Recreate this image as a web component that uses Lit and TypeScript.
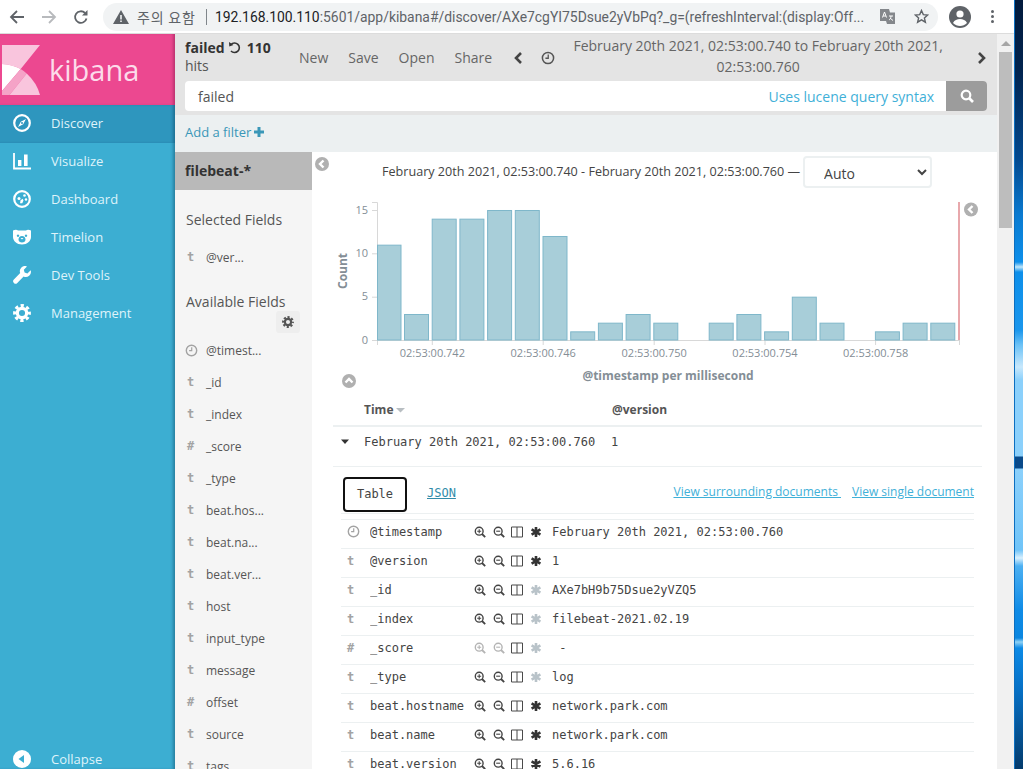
import { LitElement, html, css, svg } from "lit";
import { customElement } from "lit/decorators.js";

const gear = (size: number, color: string) => html`<svg width=${size} height=${size} viewBox="0 0 20 20"><circle cx="10" cy="10" r="5.2" fill="none" stroke=${color} stroke-width="3.6"/><circle cx="10" cy="10" r="8.2" fill="none" stroke=${color} stroke-width="3.4" stroke-dasharray="3.6 2.84" stroke-dashoffset="1.8"/></svg>`;
const clock = (size: number, color: string) => html`<svg width=${size} height=${size} viewBox="0 0 12 12"><circle cx="6" cy="6" r="4.8" fill="none" stroke=${color} stroke-width="1.3"/><path d="M6.2 3v3.2H3.8" fill="none" stroke=${color} stroke-width="1.1"/></svg>`;
const mag = (plus: boolean, color: string) => html`<svg class="ti" width="12" height="12" viewBox="0 0 12 12"><circle cx="5.2" cy="5.2" r="3.9" fill="none" stroke=${color} stroke-width="1.4"/><path d="M8 8l3.2 3.2" stroke=${color} stroke-width="1.8"/><path d=${plus ? "M3.2 5.2h4M5.2 3.2v4" : "M3.2 5.2h4"} stroke=${color} stroke-width="1.1"/></svg>`;
const cols = html`<svg class="ti" width="12" height="12" viewBox="0 0 12 12"><path d="M.5 1h11v10H.5zM6 1v10" fill="none" stroke="#4a4a4a" stroke-width="1"/></svg>`;
const star = (color: string) => html`<svg class="ti" width="12" height="12" viewBox="0 0 12 12"><path d="M6 1v10M1.6 3.4l8.8 5.2M10.4 3.4L1.6 8.6" stroke=${color} stroke-width="2.6"/></svg>`;
const circleArrow = (d: string, cls: string) => html`<svg class=${cls} width="14" height="14" viewBox="0 0 14 14"><circle cx="7" cy="7" r="7" fill="#b0b0b0"/><path d=${d} fill="none" stroke="#fff" stroke-width="2.4"/></svg>`;

const navIcons: Record<string, unknown> = {
  Discover: html`<svg width="18" height="18" viewBox="0 0 18 18"><circle cx="9" cy="9" r="7.8" fill="none" stroke="#fff" stroke-width="2.2"/><path d="M13 5L10.2 10.2 5 13 7.8 7.8z" fill="#fff"/><circle cx="9" cy="9" r="1" fill="#2e96be"/></svg>`,
  Visualize: html`<svg width="18" height="18" viewBox="0 0 18 18"><path d="M1 1v15.5h17" fill="none" stroke="#fff" stroke-width="1.8"/><path d="M5 8h3.4v6H5zM11 2.500h3.600V14H11z" fill="#fff"/></svg>`,
  Dashboard: html`<svg width="18" height="18" viewBox="0 0 18 18"><circle cx="9" cy="9" r="7.8" fill="none" stroke="#fff" stroke-width="2.200"/><circle cx="6" cy="8.500" r="1.500" fill="#fff"/><circle cx="11.500" cy="5.500" r="1.300" fill="#fff"/><circle cx="13" cy="9.500" r="1.200" fill="#fff"/><path d="M7.500 10.500l2-1.800 1 1.600-1.200 3H7z" fill="#fff"/></svg>`,
  Timelion: html`<svg width="18" height="16" viewBox="0 0 18 16"><path fill-rule="evenodd" fill="#fff" d="M0 1.500C2 .5 4 .5 5 1.500h8c1-1 3-1 5 0V8c0 4-4 7.500-9 7.500S0 12 0 8zM5 5.500a1.200 1.200 0 1 0 .01 0zM13 5.500a1.200 1.200 0 1 0 .01 0zM9 7c-2.200 0-3.500 1.800-3.500 3.500S7 13.500 9 13.500s3.500-1.300 3.500-3S11.200 7 9 7z"/><path d="M7.500 9h3l-1.500 1.500z" fill="#fff"/></svg>`,
  "Dev Tools": html`<svg width="18" height="18" viewBox="0 0 18 18"><path fill="#fff" d="M17.700 4.200l-3.300 3.200-2.800-.8-.8-2.800L14 .4a5.200 5.200 0 0 0-6.800 6.700L.9 13.500a2.400 2.400 0 0 0 3.400 3.400l6.300-6.400a5.200 5.200 0 0 0 7.100-6.300z"/></svg>`,
  Management: gear(18, "#fff"),
};

const fields = [["t", "_id"], ["t", "_index"], ["#", "_score"], ["t", "_type"], ["t", "beat.hos..."], ["t", "beat.na..."], ["t", "beat.ver..."], ["t", "host"], ["t", "input_type"], ["t", "message"], ["#", "offset"], ["t", "source"], ["t", "tags"]];
const counts = [11, 3, 14, 14, 15, 15, 12, 1, 2, 3, 2, 0, 2, 3, 1, 5, 2, 0, 1, 2, 2];
const xTicks = [[432.3, "02:53:00.742"], [543.2, "02:53:00.746"], [654.2, "02:53:00.750"], [765, "02:53:00.754"], [875.6, "02:53:00.758"]] as [number, string][];
const rows = [
  ["c", "@timestamp", "February 20th 2021, 02:53:00.760", 1, 1],
  ["t", "@version", "1", 1, 1],
  ["t", "_id", "AXe7bH9b75Dsue2yVZQ5", 1, 0],
  ["t", "_index", "filebeat-2021.02.19", 1, 0],
  ["#", "_score", "\u00a0-", 0, 0],
  ["t", "_type", "log", 1, 0],
  ["t", "beat.hostname", "network.park.com", 1, 1],
  ["t", "beat.name", "network.park.com", 1, 1],
  ["t", "beat.version", "5.6.16", 1, 1],
] as [string, string, string, number, number][];

@customElement("app-root")
export class AppRoot extends LitElement {
  static styles = css`
    :host { display: flex; width: 1023px; height: 769px; overflow: hidden; font-family: "Open Sans", sans-serif; color: #444; }
    .window { width: 1014px; height: 769px; display: flex; flex-direction: column; flex: none; }
    .wall { flex: 1; border-left: 1px solid #0c6fc0; background: linear-gradient(180deg, #021a3c 0, #02244f 70px, #034a90 160px, #0a7ad0 215px, #0d8fea 262px, #bfe6fb 267px, #0d8fea 272px, #1a96ec 330px, #6cc2f6 345px, #c8e8fc 367px, #8bd0fb 380px, #8bd0fb 456px, #0a4a8a 457px, #0a4a8a 468px, #8bd0fb 469px, #70c4f8 550px, #d8f0fe 558px, #4cb0f2 566px, #0f8be6 610px, #0a86e0 638px, #8fd2f6 642px, #0c8ae6 648px, #0670c5 690px, #043b6c 769px); }
    .chrome { height: 34px; flex: none; display: flex; align-items: center; background: #fff; border-bottom: 1px solid #dcdcdc; box-sizing: border-box; padding-left: 7px; }
    .cbtn { width: 20px; height: 20px; flex: none; margin-right: 12px; display: flex; align-items: center; justify-content: center; }
    .omni { flex: none; width: 835px; height: 28px; border-radius: 14px; background: #f1f3f4; display: flex; align-items: center; box-sizing: border-box; padding-left: 10px; font: 14px Roboto, sans-serif; color: #5f6368; white-space: nowrap; }
    .warn { font: 14px "Noto Sans CJK KR", sans-serif; margin-left: 8px; color: #5f6368; width: 60px; flex: none; letter-spacing: .8px; }
    .sep { width: 1px; height: 16px; background: #80868b; margin: 0 8px 0 9px; flex: none; }
    .url { flex: none; width: 650px; overflow: hidden; font-size: 13.900px; }
    .url b { font-weight: 400; color: #202124; }
    .trans { margin-left: 15px; flex: none; display: flex; }
    .bstar { margin-left: 19px; flex: none; display: flex; }
    .avatar { margin-left: 11px; flex: none; display: flex; }
    .dots { margin-left: 20px; flex: none; display: flex; flex-direction: column; gap: 2px; }
    .dots i { width: 3px; height: 3px; border-radius: 50%; background: #5f6368; display: block; }

    .page { flex: 1; min-height: 0; display: flex; overflow: hidden; }
    .side { width: 175px; flex: none; display: flex; flex-direction: column; background: #3caed2; box-shadow: inset -3px 0 3px -1px rgba(0,40,70,.35); overflow: hidden; }
    .logo { height: 71px; flex: none; background: #ec4890; display: flex; align-items: center; box-shadow: inset -3px 0 3px -1px rgba(80,0,40,.3); }
    .logo svg { margin-left: 2px; flex: none; }
    .logo span { font-size: 29px; line-height: 71px; color: #fcdcea; margin-left: 9px; margin-top: -1px; }
    .nav { height: 38px; flex: none; display: flex; align-items: center; padding: 0 0 2px 13px; box-sizing: border-box; font-size: 13px; color: #dff3fa; }
    .nav.on { background: #2e96be; box-shadow: inset -3px 0 3px -1px rgba(0,40,70,.35); }
    .nav .ic { width: 18px; height: 18px; display: flex; align-items: center; justify-content: center; flex: none; margin-right: 20px; }
    .spacer { flex: 1; }
    .collapse { margin-bottom: -9px; padding-bottom: 0; }

    .main { flex: 1; min-width: 0; display: flex; flex-direction: column; }
    .top { height: 81px; flex: none; background: #e4e4e4; box-sizing: border-box; padding: 0 10px; display: flex; flex-direction: column; }
    .topline { height: 47px; display: flex; flex: none; align-items: center; }
    .hits { width: 114px; flex: none; font-size: 14px; line-height: 18px; color: #555; margin-top: -1px; }
    .hits b { color: #333; font-weight: 700; }
    .hits svg { vertical-align: -1px; margin: 0 2px 0 0; }
    .menu { flex: none; display: flex; font-size: 14px; color: #666; gap: 20px; margin-top: -1px; }
    .arrowl { margin-left: 21px; display: flex; flex: none; }
    .clk { margin-left: 18px; display: flex; flex: none; }
    .range { width: 380px; flex: none; text-align: center; font-size: 14px; line-height: 21px; color: #666; margin: -4px 0 0 13px; }
    .arrowr { margin-left: 29px; display: flex; flex: none; }
    .search { height: 30px; flex: none; background: #fff; border-radius: 4px; display: flex; align-items: center; font-size: 14px; color: #555; padding-left: 13px; overflow: hidden; }
    .search .hint { margin-left: auto; color: #3fb0d8; margin-right: 12px; }
    .search .go { width: 41px; height: 30px; background: #9c9c9c; display: flex; align-items: center; justify-content: center; flex: none; }
    .filter { height: 37px; flex: none; background: #ecf0f1; box-sizing: border-box; padding: 0 0 4px 10px; display: flex; align-items: center; gap: 3px; font-size: 13px; color: #3a97b8; }
    .body { flex: 1; min-height: 0; display: flex; overflow: hidden; }
    .fields { width: 137px; flex: none; background: #f5f5f5; display: flex; flex-direction: column; }
    .fbhead { height: 38px; flex: none; box-sizing: border-box; background: #b9b9b9; display: flex; align-items: center; padding: 0 0 2px 10px; font-weight: 700; font-size: 14px; color: #333; }
    .ftitle { font-size: 14px; color: #555; padding-left: 11px; line-height: 20px; }
    .ftitle.sel { margin-top: 20px; margin-bottom: 11px; }
    .ftitle.av { margin-top: 19px; }
    .f { height: 32px; flex: none; display: flex; align-items: center; font-size: 12px; color: #555; }
    .f .t { width: 31px; flex: none; padding-left: 12px; box-sizing: border-box; font: 700 12px "DejaVu Sans Mono", monospace; color: #a3a3a3; display: flex; }
    .f .t.clk-t { padding-left: 10px; }
    .gearbox { width: 24px; height: 22px; background: #eeeeee; border-radius: 3px; display: flex; align-items: center; justify-content: center; margin: -1px 0 0 101px; flex: none; }
    .gap { height: 1px; flex: none; }
    .content { flex: 1; min-width: 0; background: #fff; display: flex; flex-direction: column; position: relative; }
    .col-l { position: absolute; left: 3px; top: 5px; }
    .chart-head { height: 38px; flex: none; display: flex; align-items: center; box-sizing: border-box; padding-left: 70px; font-size: 12.600px; color: #444; white-space: nowrap; }
    select { width: 129px; height: 32px; margin: 2px 0 0 3px; flex: none; background: #fff; border: 2px solid #ecf0f1; border-radius: 4px; font: 14px "Open Sans", sans-serif; color: #444; padding: 2px 0 0 15px; }
    .chart { display: block; flex: none; }
    .chart text { font-family: "Open Sans", sans-serif; }
    .tbl { width: 649px; margin-left: 21px; flex: none; }
    .thead { height: 29px; border-bottom: 2px solid #ecf0f1; display: flex; align-items: center; font-size: 12px; font-weight: 700; color: #555; padding-bottom: 1px; }
    .thead .time { padding-left: 31px; width: 248px; display: flex; align-items: center; gap: 3px; }
    .mono { font-family: "DejaVu Sans Mono", monospace; font-size: 12px; color: #444; }
    .row1 { border-bottom: 1px solid #ecf0f1; display: flex; align-items: center; padding-bottom: 10px; box-sizing: border-box; height: 40px; white-space: pre; }
    .row1 svg { margin: 0 14px 0 7px; flex: none; }
    .row1 .d { width: 247px; flex: none; }
    .det { margin: 0 8px; width: 633px; }
    .tabs { height: 47px; border-bottom: 1px solid #ecf0f1; box-sizing: border-box; display: flex; align-items: center; padding-left: 2px; }
    .tab { width: 64px; height: 35px; margin-top: 8px; box-sizing: border-box; border: 2px solid #111; border-radius: 4px; display: flex; align-items: center; justify-content: center; flex: none; font-size: 12px; }
    .json { margin: 6px 0 0 20px; color: #328caa; text-decoration: underline; font-size: 12px; }
    .links { margin: 2px 0 0 auto; font-family: "Open Sans", sans-serif; font-size: 12px; color: #3fb0d8; text-decoration: underline; display: flex; gap: 11px; white-space: pre; }
    .rows { margin-top: 5px; border-top: 1px solid #ecf0f1; }
    .r { height: 29px; box-sizing: border-box; border-bottom: 1px solid #ecf0f1; display: flex; align-items: center; padding-bottom: 5px; white-space: pre; }
    .r .ty { width: 29px; flex: none; padding-left: 6px; box-sizing: border-box; font: 700 12px "DejaVu Sans Mono", monospace; color: #a3a3a3; display: flex; }
    .r .nm { width: 104px; flex: none; overflow: hidden; font-size: 12px; }
    .r .acts { width: 78px; flex: none; display: flex; gap: 6.600px; }
    .r .ti { flex: none; }
    .scroll { width: 17px; flex: none; background: #f1f1f1; display: flex; flex-direction: column; align-items: center; }
    .sup { height: 18px; flex: none; display: flex; align-items: center; justify-content: center; }
    .thumb { width: 13px; height: 176px; background: #bdbdbd; flex: none; }
  `;

  render() {
    const cx = (i: number) => 376.3 + 27.7 * i;
    return html`
      <div class="window">
        <div class="chrome">
          <div class="cbtn"><svg width="16" height="16" viewBox="0 0 16 16"><path d="M15 8H2.500M8 2L2 8l6 6" fill="none" stroke="#5f6368" stroke-width="1.800"/></svg></div>
          <div class="cbtn"><svg width="16" height="16" viewBox="0 0 16 16"><path d="M1 8h12.500M8 2l6 6-6 6" fill="none" stroke="#b8babd" stroke-width="1.800"/></svg></div>
          <div class="cbtn"><svg width="16" height="16" viewBox="0 0 16 16"><path d="M13.500 9.500A5.800 5.800 0 1 1 12 4" fill="none" stroke="#5f6368" stroke-width="1.800"/><path d="M14.500 1v5.500H9z" fill="#5f6368"/></svg></div>
          <div class="omni">
            <svg width="16" height="14" viewBox="0 0 16 14"><path fill-rule="evenodd" d="M8 0l8 14H0zM7.200 5v4.500h1.600V5zM7.200 10.500v1.600h1.600v-1.600z" fill="#5f6368"/></svg>
            <span class="warn">주의 요함</span><span class="sep"></span>
            <span class="url"><b>192.168.100.110</b>:5601/app/kibana#/discover/AXe7cgYI75Dsue2yVbPq?_g=(refreshInterval:(display:Off...</span>
            <span class="trans"><svg width="15" height="15" viewBox="0 0 15 15"><path d="M0 0h9l1 3.500h5V15H7l-1-3H0z" fill="#5f6368" opacity=".75"/><path d="M2.500 8.500l2-5.500 2 5.500M3.200 7h2.600M9 7h4M11 7c0 2-1 3.500-2 4M10 9l3 2.500" fill="none" stroke="#fff" stroke-width="1"/></svg></span>
            <span class="bstar"><svg width="15" height="15" viewBox="0 0 15 15"><path d="M7.500 1.500l1.800 4.100 4.400.400-3.300 2.900 1 4.300-3.900-2.300-3.900 2.300 1-4.300L1.300 6l4.400-.400z" fill="none" stroke="#5f6368" stroke-width="1.400"/></svg></span>
          </div>
          <span class="avatar"><svg width="22" height="22" viewBox="0 0 22 22"><circle cx="11" cy="11" r="11" fill="#5f6368"/><circle cx="11" cy="8" r="3.600" fill="#fff"/><path d="M4 17c1.500-3 4-4 7-4s5.500 1 7 4c-2 2-4.500 3-7 3s-5-1-7-3z" fill="#fff"/></svg></span>
          <span class="dots"><i></i><i></i><i></i></span>
        </div>
        <div class="page">
          <div class="side">
            <div class="logo">
              <svg width="38" height="50" viewBox="2 45 38 50">
                <path d="M2 45H40L20.700 69Q12 64.500 2 64Z" fill="#f9c5dd"/>
                <path d="M2 64Q12 64.500 20.700 69L2 91Z" fill="#fff"/>
                <path d="M2 91L20.700 69Q24 71 26.700 73.500L9.500 95H2Z" fill="#f5a3c7"/>
                <path d="M9.500 95L26.700 73.500Q37 83 40 95Z" fill="#f9c5dd"/>
              </svg>
              <span>kibana</span>
            </div>
            ${["Discover", "Visualize", "Dashboard", "Timelion", "Dev Tools", "Management"].map((n, i) => html`<div class="nav ${i === 0 ? "on" : ""}"><span class="ic">${navIcons[n]}</span>${n}</div>`)}
            <div class="spacer"></div>
            <div class="nav collapse"><span class="ic"><svg width="18" height="18" viewBox="0 0 18 18"><circle cx="9" cy="9" r="9" fill="#fff"/><path d="M5.500 9L11 5v8z" fill="#3caed2"/></svg></span>Collapse</div>
          </div>
          <div class="main">
            <div class="top">
              <div class="topline">
                <div class="hits"><b>failed <svg width="13" height="13" viewBox="0 0 13 13"><path d="M3 3.500A4.800 4.800 0 1 1 3 10" fill="none" stroke="#333" stroke-width="1.600"/><path d="M1 1l.300 4.500L5.500 4z" fill="#333"/></svg> 110</b><br>hits</div>
                <div class="menu"><span>New</span><span>Save</span><span>Open</span><span>Share</span></div>
                <span class="arrowl"><svg width="10" height="14" viewBox="0 0 10 14"><path d="M8 2L3 7l5 5" fill="none" stroke="#444" stroke-width="2.600"/></svg></span>
                <span class="clk">${clock(14, "#555")}</span>
                <div class="range">February 20th 2021, 02:53:00.740 to February 20th 2021, 02:53:00.760</div>
                <span class="arrowr"><svg width="10" height="14" viewBox="0 0 10 14"><path d="M2 2l5 5-5 5" fill="none" stroke="#444" stroke-width="2.600"/></svg></span>
              </div>
              <div class="search">
                <span>failed</span><span class="hint">Uses lucene query syntax</span>
                <span class="go"><svg width="14" height="14" viewBox="0 0 14 14"><circle cx="6" cy="6" r="4.300" fill="none" stroke="#fff" stroke-width="2.200"/><path d="M9 9l4 4" stroke="#fff" stroke-width="2.600"/></svg></span>
              </div>
            </div>
            <div class="filter">Add a filter<svg width="10" height="10" viewBox="0 0 10 10"><path d="M5 0v10M0 5h10" stroke="#3a97b8" stroke-width="3"/></svg></div>
            <div class="body">
              <div class="fields">
                <div class="fbhead">filebeat-*</div>
                <div class="ftitle sel">Selected Fields</div>
                <div class="f"><span class="t">t</span>@ver...</div>
                <div class="ftitle av">Available Fields</div>
                <div class="gearbox">${gear(12, "#555")}</div>
                <div class="gap"></div>
                <div class="f"><span class="t clk-t">${clock(13, "#a3a3a3")}</span>@timest...</div>
                ${fields.map(([t, n]) => html`<div class="f"><span class="t">${t}</span>${n}</div>`)}
              </div>
              <div class="content">
                ${circleArrow("M8.500 3.500L5 7l3.500 3.500", "col-l")}
                <div class="chart-head">February 20th 2021, 02:53:00.740 - February 20th 2021, 02:53:00.760 —
                  <select><option>Auto</option></select>
                </div>
                <svg class="chart" width="685" height="205" viewBox="312 190 685 205">
                  <path d="M372 202.500h5.500V340.500H959M372 210.500h5M372 253.800h5M372 297.200h5M372 340.500h5" fill="none" stroke="#d8d8d8" stroke-width="1"/>
                  <path d="M377.500 340v5M959.500 340v5" stroke="#d8d8d8"/>
                  ${xTicks.map(([x, l]) => svg`<path d="M${x} 340v5" stroke="#d8d8d8"/><text x=${x} y="357" font-size="11" fill="#848e96" text-anchor="middle">${l}</text>`)}
                  ${[[15, 213.500], [10, 256.800], [5, 300.200], [0, 343.500]].map(([v, y]) => svg`<text x="368" y=${y} font-size="11" fill="#848e96" text-anchor="end">${v}</text>`)}
                  ${counts.map((c, i) => c ? svg`<rect x=${i === 0 ? 377.500 : cx(i) + .5} y=${340 - c * 8.667 + .5} width=${i === 0 ? 23.500 : 24} height=${c * 8.667 - .5} fill="#a8ced9" stroke="#7fb7ca" stroke-width="1"/>` : "")}
                  <rect x="958" y="202" width="2" height="138" fill="#e8a8ac"/>
                  <text transform="translate(347 289) rotate(-90)" font-size="12" font-weight="700" fill="#848e96">Count</text>
                  <text x="668" y="380" font-size="12" font-weight="700" fill="#848e96" text-anchor="middle">@timestamp per millisecond</text>
                  <circle cx="971" cy="209.500" r="7" fill="#b0b0b0"/><path d="M972.500 206L969 209.500l3.500 3.500" fill="none" stroke="#fff" stroke-width="2.400"/>
                  <circle cx="349" cy="381" r="7" fill="#b0b0b0"/><path d="M345.500 382.500L349 379l3.500 3.500" fill="none" stroke="#fff" stroke-width="2.400"/>
                </svg>
                <div class="tbl">
                  <div class="thead"><span class="time">Time<svg width="10" height="6" viewBox="0 0 10 6"><path d="M0 1h9L4.500 5.500z" fill="#b8bec2"/></svg></span><span>@version</span></div>
                  <div class="row1 mono"><svg width="10" height="6" viewBox="0 0 10 6"><path d="M1 .5h8L5 5z" fill="#333"/></svg><span class="d">February 20th 2021, 02:53:00.760</span><span>1</span></div>
                  <div class="det">
                    <div class="tabs mono">
                      <span class="tab">Table</span><span class="json">JSON</span>
                      <span class="links"><span>View surrounding documents </span><span>View single document</span></span>
                    </div>
                    <div class="rows">
                      ${rows.map(([ty, n, v, on, ex]) => html`<div class="r mono">
                        <span class="ty">${ty === "c" ? clock(13, "#a3a3a3") : ty}</span><span class="nm">${n}</span>
                        <span class="acts">${mag(true, on ? "#444" : "#b4b4b4")}${mag(false, on ? "#444" : "#b4b4b4")}${cols}${star(ex ? "#333" : "#b9c3c9")}</span>
                        <span>${v}</span></div>`)}
                    </div>
                  </div>
                </div>
              </div>
            </div>
          </div>
          <div class="scroll">
            <span class="sup"><svg width="10" height="5" viewBox="0 0 10 5"><path d="M0 5h10L5 0z" fill="#a6a6a6"/></svg></span>
            <div class="thumb"></div>
          </div>
        </div>
      </div>
      <div class="wall"></div>
    `;
  }
}
